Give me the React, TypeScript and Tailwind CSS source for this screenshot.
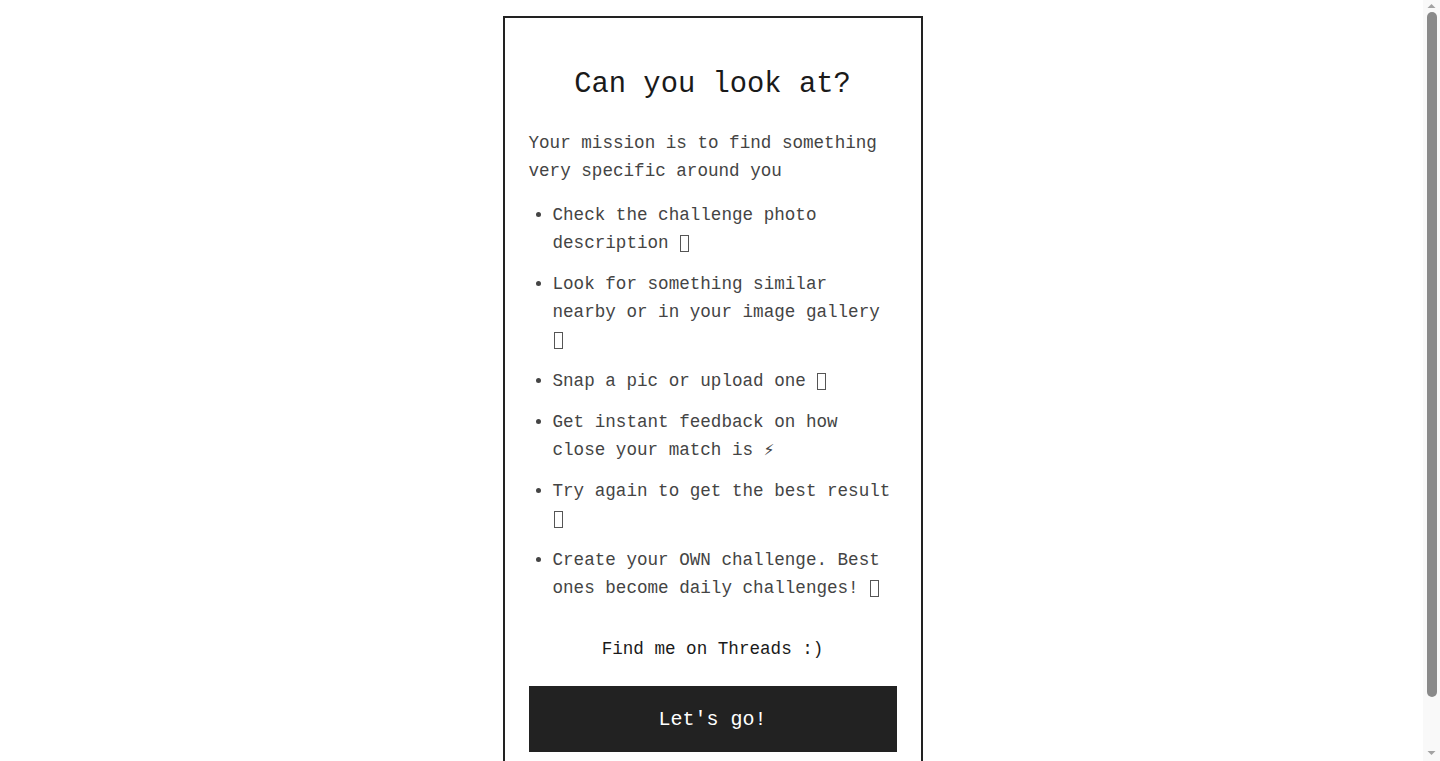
import React from "react";

type Item = { text: string; emoji?: string };

const items: Item[] = [
  { text: "Check the challenge photo description", emoji: "🧐" },
  { text: "Look for something similar nearby or in your image gallery", emoji: "🔍" },
  { text: "Snap a pic or upload one", emoji: "📸" },
  { text: "Get instant feedback on how close your match is ⚡" },
  { text: "Try again to get the best result", emoji: "🔄" },
  { text: "Create your OWN challenge. Best ones become daily challenges!", emoji: "🏆" },
];

function Tofu({ label }: { label: string }) {
  return (
    <span
      aria-label={label}
      className="inline-block w-[9px] h-[17px] border border-[#555] align-[-4px] mx-[1px]"
    />
  );
}

export default function App() {
  return (
    <div className="relative">
      <div
        className="min-h-screen bg-white flex justify-center pt-4 pb-[30px] pr-[15px]"
        style={{ fontFamily: '"Liberation Mono", "DejaVu Sans Mono", monospace' }}
      >
        <div className="w-[420px] border-2 border-[#222] px-6 pt-6 pb-6 flex flex-col">
          <h1 className="mt-[26px] text-center text-[28.8px] leading-[1.2] text-[#1a1a1a]">
            Can you look at?
          </h1>
          <p className="mt-[26px] text-[17.6px] leading-[1.6] text-[#444]">
            Your mission is to find something very specific around you
          </p>
          <ul className="mt-4 list-disc pl-6 flex flex-col gap-[12.8px] text-[17.6px] leading-[1.6] text-[#444]">
            {items.map((it) => (
              <li key={it.text} className="marker:text-[#444]">
                {it.text}
                {it.emoji ? (
                  <>
                    {" "}
                    <Tofu label={it.emoji} />
                  </>
                ) : null}
              </li>
            ))}
          </ul>
          <p className="mt-[32px] text-center text-[17.6px] leading-[1.6] text-[#1a1a1a]">
            Find me on Threads :)
          </p>
          <button className="mt-[23px] h-[66px] w-full bg-[#222] text-white text-[20px] pt-[2px]">
            Let's go!
          </button>
        </div>
      </div>
      <div className="fixed top-0 right-0 w-[17px] h-screen bg-[#f9f9f9] flex flex-col items-center">
        <svg width="17" height="12" viewBox="0 0 17 12" className="shrink-0">
          <path d="M4.5 8 L8.5 4 L12.5 8 Z" fill="#a3a3a3" />
        </svg>
        <div className="w-[10px] h-[685px] rounded-full bg-[#8a8a8a] shrink-0" />
        <div className="flex-1" />
        <svg width="17" height="14" viewBox="0 0 17 14" className="shrink-0">
          <path d="M4.5 4 L8.5 8 L12.5 4 Z" fill="#a3a3a3" />
        </svg>
      </div>
    </div>
  );
}
